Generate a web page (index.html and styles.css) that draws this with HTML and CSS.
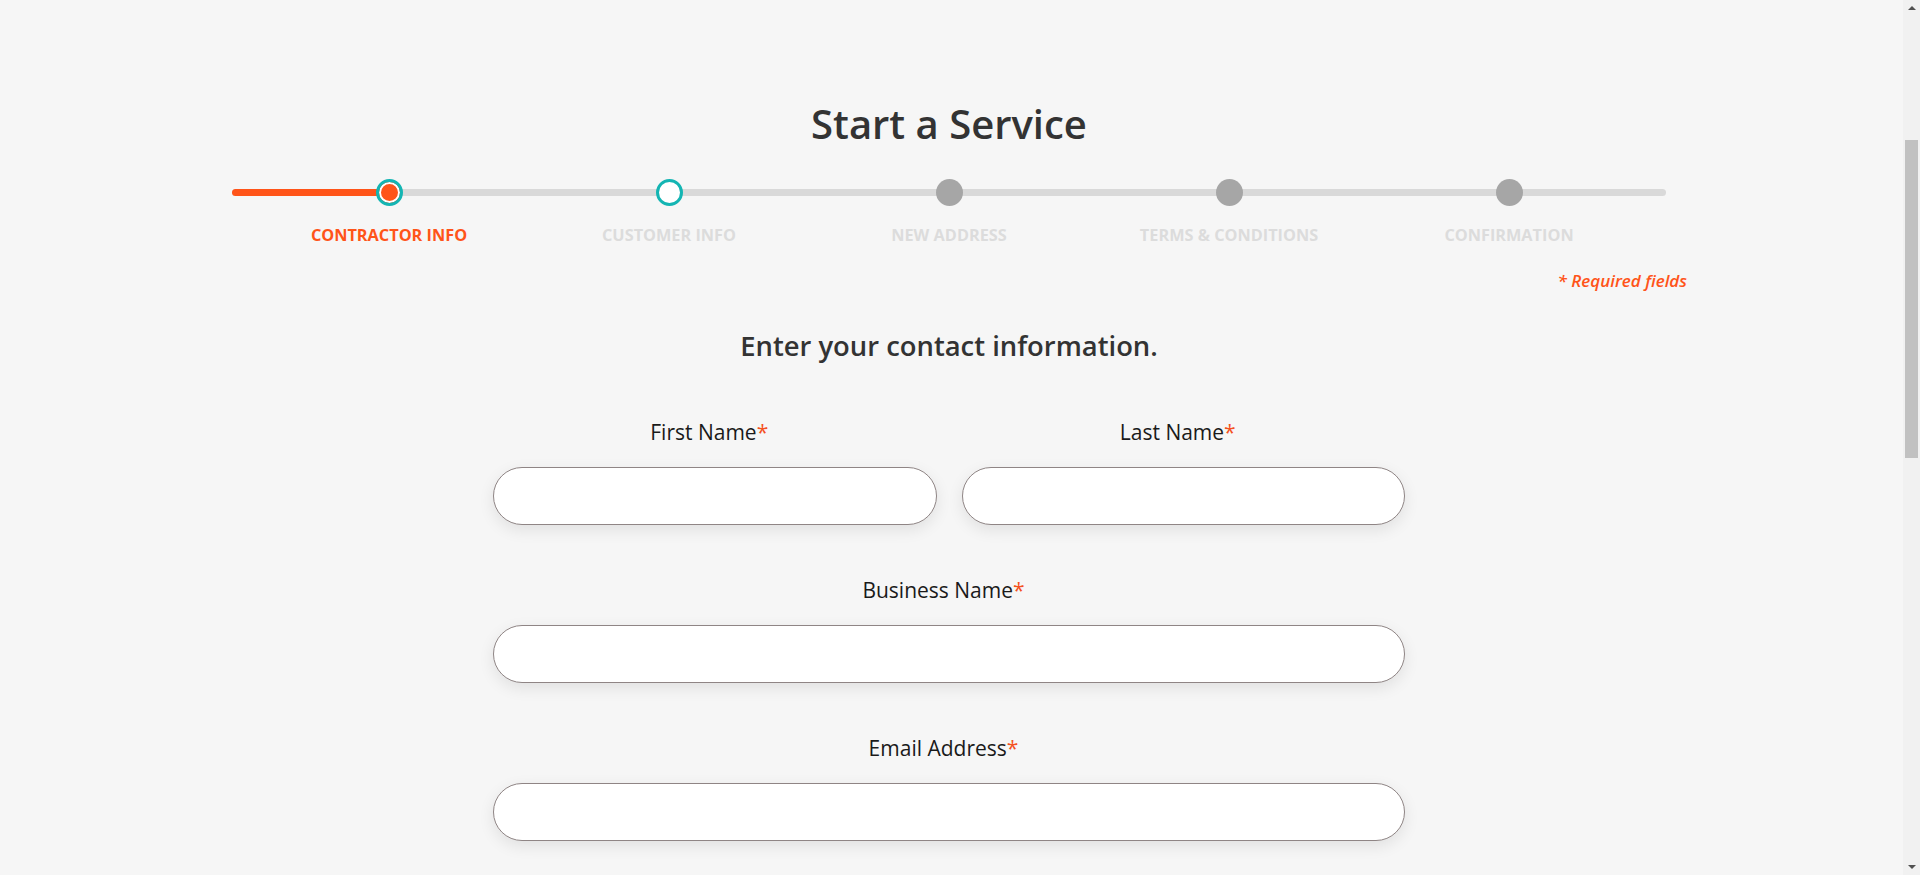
FILE: index.html
```html
<!DOCTYPE html>
<html lang="en">
<head>
<meta charset="utf-8">
<title>Start a Service</title>
<link rel="stylesheet" href="styles.css">
</head>
<body>
<main class="page">
  <h1 class="title">Start a Service</h1>

  <div class="stepper">
    <ol class="steps">
      <li class="step step-current">
        <span class="dot"></span>
        <span class="step-label">CONTRACTOR INFO</span>
      </li>
      <li class="step step-next">
        <span class="dot"></span>
        <span class="step-label">CUSTOMER INFO</span>
      </li>
      <li class="step">
        <span class="dot"></span>
        <span class="step-label">NEW ADDRESS</span>
      </li>
      <li class="step">
        <span class="dot"></span>
        <span class="step-label">TERMS &amp; CONDITIONS</span>
      </li>
      <li class="step">
        <span class="dot"></span>
        <span class="step-label">CONFIRMATION</span>
      </li>
    </ol>
  </div>

  <p class="required-note">* Required fields</p>

  <h2 class="form-heading">Enter your contact information.</h2>

  <form class="form">
    <div class="form-row form-row-split">
      <label class="field">
        <span class="field-label">First Name<span class="req">*</span></span>
        <input class="field-input" type="text">
      </label>
      <label class="field">
        <span class="field-label">Last Name<span class="req">*</span></span>
        <input class="field-input" type="text">
      </label>
    </div>
    <div class="form-row">
      <label class="field">
        <span class="field-label">Business Name<span class="req">*</span></span>
        <input class="field-input" type="text">
      </label>
    </div>
    <div class="form-row">
      <label class="field">
        <span class="field-label">Email Address<span class="req">*</span></span>
        <input class="field-input" type="email">
      </label>
    </div>
  </form>
</main>

<div class="scrollbar" aria-hidden="true">
  <span class="scroll-arrow scroll-arrow-up"></span>
  <span class="scroll-thumb"></span>
  <span class="scroll-arrow scroll-arrow-down"></span>
</div>
</body>
</html>
```

FILE: styles.css
```css
* {
  box-sizing: border-box;
}

html, body {
  margin: 0;
  padding: 0;
}

body {
  background: #f6f6f6;
  font-family: "Open Sans", "Noto Sans", sans-serif;
  color: #333;
  margin-right: 17px;
}

.page {
  width: 1476px;
  padding-right: 5px;
  box-sizing: content-box;
  margin: 0 auto;
  padding-top: 100px;
  padding-bottom: 1440px;
  display: flex;
  flex-direction: column;
}

.title {
  margin: 0;
  text-align: center;
  font-size: 40px;
  line-height: 48px;
  font-weight: 600;
  color: #333;
}

.stepper {
  margin: 31px 21px 0 21px;
  position: relative;
}

.stepper::before {
  content: "";
  position: absolute;
  left: 0;
  right: 0;
  top: 10px;
  height: 7px;
  border-radius: 3.5px;
  background: #d9d9d9;
}

.stepper::after {
  content: "";
  position: absolute;
  left: 0;
  width: 157px;
  top: 10px;
  height: 7px;
  border-radius: 3.5px;
  background: #ff5419;
}

.steps {
  list-style: none;
  margin: 0;
  padding: 0 17px;
  display: grid;
  grid-template-columns: repeat(5, 1fr);
  position: relative;
  z-index: 1;
}

.step {
  display: flex;
  flex-direction: column;
  align-items: center;
}

.dot {
  width: 27px;
  height: 27px;
  border-radius: 50%;
  background: #a6a6a6;
}

.step-current .dot {
  background: #ff5419;
  border: 3px solid #14b5b3;
  box-shadow: inset 0 0 0 2px #fff;
}

.step-next .dot {
  background: #fff;
  border: 3px solid #14b5b3;
}

.step-label {
  margin-top: 18px;
  font-size: 16.3px;
  line-height: 22px;
  font-weight: 700;
  color: #dcdcdc;
  white-space: nowrap;
}

.step-current .step-label {
  color: #ff5419;
}

.required-note {
  margin: 23px 0 0 0;
  text-align: right;
  font-size: 17px;
  line-height: 24px;
  font-style: italic;
  font-weight: 600;
  color: #ff5419;
}

.form-heading {
  margin: 34px 0 0 0;
  text-align: center;
  font-size: 27.4px;
  line-height: 38px;
  font-weight: 600;
  color: #333;
}

.form {
  width: 912px;
  margin: 53px auto 0 auto;
  display: flex;
  flex-direction: column;
  gap: 51px;
}

.form-row {
  display: flex;
}

.form-row-split {
  gap: 25px;
}

.field {
  flex: 1;
  display: flex;
  flex-direction: column;
  align-items: center;
  gap: 21px;
}

.field-label {
  padding-right: 11px;
  font-size: 21px;
  line-height: 28px;
  font-weight: 400;
  color: #1a1a1a;
}

.req {
  color: #f4511e;
}

.field-input {
  width: 100%;
  height: 58px;
  border: 1px solid #8f8585;
  border-radius: 29px;
  background: #fff;
  box-shadow: 0 5px 16px rgba(0, 0, 0, 0.09);
  font-family: inherit;
  font-size: 18px;
  padding: 0 24px;
  outline: none;
}

.scrollbar {
  position: fixed;
  top: 0;
  right: 0;
  width: 17px;
  height: 100vh;
  background: #f1f1f1;
  display: flex;
  flex-direction: column;
  align-items: center;
}

.scroll-arrow {
  width: 0;
  height: 0;
  border-left: 4.5px solid transparent;
  border-right: 4.5px solid transparent;
}

.scroll-arrow-up {
  margin-top: 6px;
  border-bottom: 4.5px solid #505050;
}

.scroll-thumb {
  width: 13px;
  height: 318px;
  margin-top: 130px;
  background: #c1c1c1;
}

.scroll-arrow-down {
  margin-top: auto;
  margin-bottom: 6px;
  border-top: 4.5px solid #505050;
}
```
